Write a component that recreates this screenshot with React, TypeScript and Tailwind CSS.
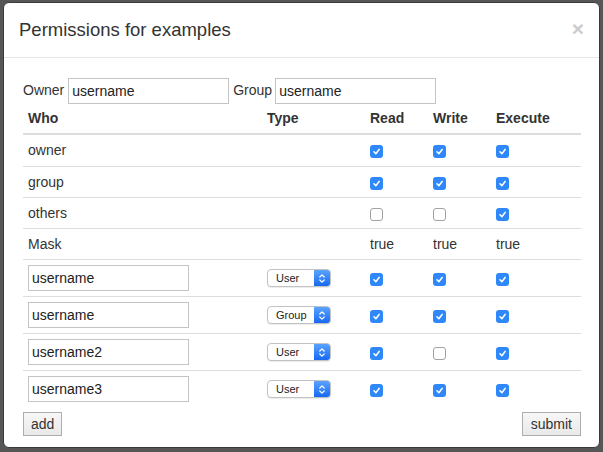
import React from "react"

type Entry = {
    name: string,
    type: string,
    read: boolean,
    write: boolean,
    execute: boolean,
}

const fixed = [
    { who: "owner", read: true, write: true, execute: true },
    { who: "group", read: true, write: true, execute: true },
    { who: "others", read: false, write: false, execute: true },
]

const entries: Entry[] = [
    { name: "username", type: "User", read: true, write: true, execute: true },
    { name: "username", type: "Group", read: true, write: true, execute: true },
    { name: "username2", type: "User", read: true, write: false, execute: true },
    { name: "username3", type: "User", read: true, write: true, execute: true },
]

const cols = "grid grid-cols-[239px_103px_63px_63px_90px]"

const Check = ({ on }: { on: boolean }) => {
    if (!on) {
        return <span className="block w-[13px] h-[13px] mt-[2px] rounded-[3px] border border-[#a3a3a3] bg-white" />
    }
    return (
        <span className="flex w-[13px] h-[13px] mt-[2px] rounded-[3px] bg-[#2f88f9] items-center justify-center">
            <svg width="9" height="9" viewBox="0 0 10 10">
                <path d="M2.2 5.3 L4.3 7.4 L7.9 2.7" stroke="white" strokeWidth="1.7" fill="none" strokeLinecap="round" strokeLinejoin="round" />
            </svg>
        </span>
    )
}

const Select = ({ value }: { value: string }) => (
    <div className="flex w-[64px] h-[18px] rounded-[4px] border border-[#c2c2c2] bg-white shadow-[0_1px_1px_rgba(0,0,0,0.08)] overflow-hidden">
        <span className="flex-1 pl-[8px] text-[11px] leading-[16px] text-[#222]">{value}</span>
        <span className="w-[16px] h-full bg-gradient-to-b from-[#5aa3ff] to-[#1668f2] flex items-center justify-center">
            <svg width="8" height="11" viewBox="0 0 8 11">
                <path d="M1.8 4 L4 1.8 L6.2 4 M1.8 7 L4 9.2 L6.2 7" stroke="white" strokeWidth="1.2" fill="none" strokeLinecap="round" strokeLinejoin="round" />
            </svg>
        </span>
    </div>
)

const TextInput = ({ value, width }: { value: string, width: string }) => (
    <div className={`${width} h-[26px] border border-[#c4c4c4] bg-white px-[3px] text-[14px] leading-[24px] text-[#222]`}>
        {value}
    </div>
)

const Cell = ({ children }: { children?: React.ReactNode }) => (
    <div className="px-[5px] flex items-center">{children}</div>
)

export default function App() {
    return (
        <div className="w-[603px] h-[452px] bg-[#565656] pt-[2px] pl-[3px] font-['Liberation_Sans',Arial,sans-serif] text-[#333]">
            <div className="w-[597px] h-[446px] bg-white rounded-[6px] border border-[#3a3a3a] flex flex-col">

                <div className="h-[55px] border-b border-[#e5e5e5] pl-[15px] pr-[15px] flex items-center justify-between">
                    <h4 className="text-[18.5px] leading-[20px]">Permissions for examples</h4>
                    <span className="text-[21px] font-bold leading-none text-[#cccccc] -mt-[4px]">×</span>
                </div>

                <div className="pt-[20px] pl-[19px] text-[14px] w-[577px]">
                    <div className="flex items-center h-[25px]">
                        <span className="mr-[4px]">Owner</span>
                        <TextInput value="username" width="w-[161px]" />
                        <span className="ml-[4px] mr-[3px]">Group</span>
                        <TextInput value="username" width="w-[161px]" />
                    </div>

                    <div className={`${cols} h-[32px] pt-[1px] border-b-2 border-[#dddddd] font-bold`}>
                        <Cell>Who</Cell>
                        <Cell>Type</Cell>
                        <Cell>Read</Cell>
                        <Cell>Write</Cell>
                        <Cell>Execute</Cell>
                    </div>

                    {fixed.map((row, i) => (
                        <div key={row.who} className={`${cols} h-[31px] ${i > 0 ? "border-t border-[#dddddd]" : ""}`}>
                            <Cell>{row.who}</Cell>
                            <Cell />
                            <Cell><Check on={row.read} /></Cell>
                            <Cell><Check on={row.write} /></Cell>
                            <Cell><Check on={row.execute} /></Cell>
                        </div>
                    ))}

                    <div className={`${cols} h-[31px] border-t border-[#dddddd]`}>
                        <Cell>Mask</Cell>
                        <Cell />
                        <Cell>true</Cell>
                        <Cell>true</Cell>
                        <Cell>true</Cell>
                    </div>

                    {entries.map((row, i) => (
                        <div key={i} className={`${cols} h-[37px] border-t border-[#dddddd]`}>
                            <Cell><TextInput value={row.name} width="w-[161px]" /></Cell>
                            <Cell><Select value={row.type} /></Cell>
                            <Cell><Check on={row.read} /></Cell>
                            <Cell><Check on={row.write} /></Cell>
                            <Cell><Check on={row.execute} /></Cell>
                        </div>
                    ))}

                    <div className="flex justify-between mt-[5px]">
                        <button className="h-[24px] px-[7px] border border-[#adadad] bg-gradient-to-b from-[#f7f7f7] to-[#e9e9e9] text-[14px] leading-[22px] text-[#333]">add</button>
                        <button className="h-[24px] px-[8px] border border-[#adadad] bg-gradient-to-b from-[#f7f7f7] to-[#e9e9e9] text-[14px] leading-[22px] text-[#333]">submit</button>
                    </div>
                </div>

            </div>
        </div>
    )
}
